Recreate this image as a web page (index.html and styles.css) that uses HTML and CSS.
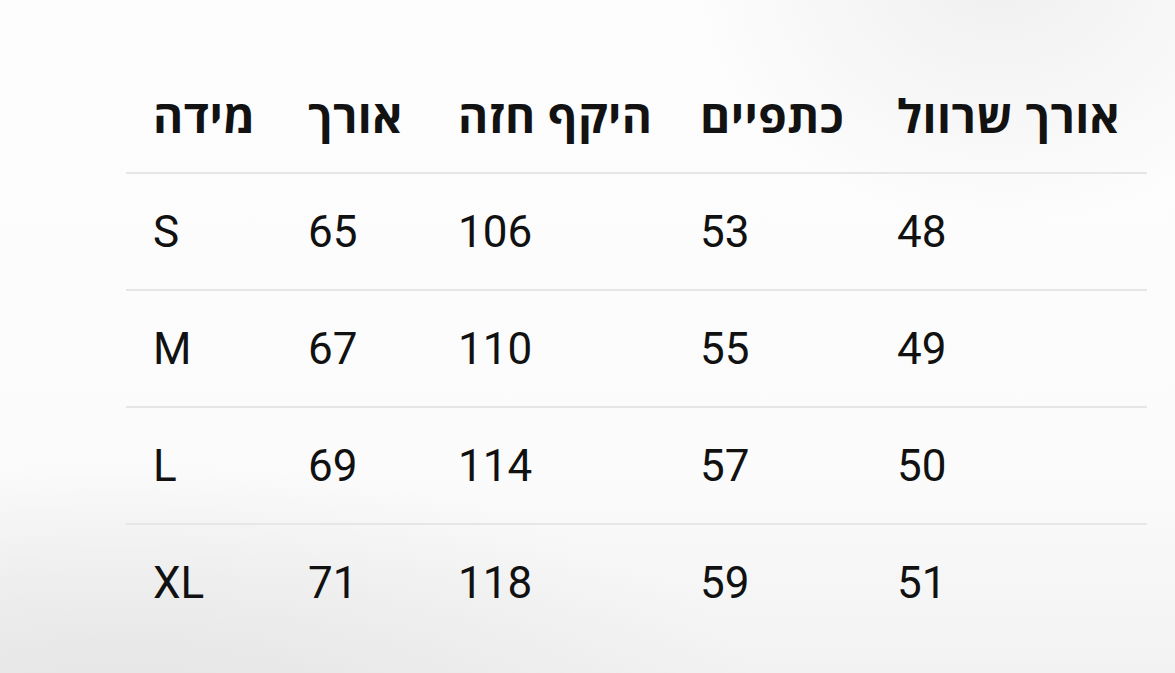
FILE: index.html
```html
<!DOCTYPE html>
<html lang="he">
<head>
<meta charset="utf-8">
<title>טבלת מידות</title>
<link rel="stylesheet" href="styles.css">
</head>
<body>
<main class="page">
  <table class="sizes">
    <colgroup>
      <col class="c1"><col class="c2"><col class="c3"><col class="c4"><col class="c5">
    </colgroup>
    <thead>
      <tr><th>מידה</th><th>אורך</th><th>היקף חזה</th><th>כתפיים</th><th>אורך שרוול</th></tr>
    </thead>
    <tbody>
      <tr><td>S</td><td>65</td><td>106</td><td>53</td><td>48</td></tr>
      <tr><td>M</td><td>67</td><td>110</td><td>55</td><td>49</td></tr>
      <tr><td>L</td><td>69</td><td>114</td><td>57</td><td>50</td></tr>
      <tr><td>XL</td><td>71</td><td>118</td><td>59</td><td>51</td></tr>
    </tbody>
  </table>
</main>
</body>
</html>
```

FILE: styles.css
```css
html, body {
  margin: 0;
  height: 100%;
}
body {
  font-family: Roboto, "DejaVu Sans", sans-serif;
  color: #111;
  background:
    radial-gradient(ellipse 320px 260px at 1000px -40px, rgba(225,225,225,0.5), rgba(225,225,225,0) 100%),
    radial-gradient(ellipse 650px 260px at 120px 720px, rgba(224,224,224,0.8), rgba(224,224,224,0) 100%),
    linear-gradient(180deg, #fdfdfd 0%, #fbfbfb 70%, #f2f2f2 100%);
  overflow: hidden;
}
.page {
  padding: 58px 0 0 126px;
}
.sizes {
  border-collapse: collapse;
  table-layout: fixed;
  width: 1021px;
}
.c1 { width: 155px; }
.c2 { width: 150px; }
.c3 { width: 242px; }
.c4 { width: 197px; }
.c5 { width: 277px; }
.sizes th,
.sizes td {
  padding: 0 0 0 27px;
  text-align: left;
  vertical-align: middle;
  white-space: nowrap;
  font-size: 44px;
  line-height: 1;
}
.sizes th {
  height: 114px;
  font-family: "Open Sans", "DejaVu Sans", sans-serif;
  font-weight: 700;
  font-size: 46px;
  letter-spacing: 0.5px;
  color: #121212;
}
.sizes td {
  height: 115px;
  font-weight: 400;
}
.sizes thead tr,
.sizes tbody tr:not(:last-child) {
  border-bottom: 2px solid #e6e6e6;
}
```
